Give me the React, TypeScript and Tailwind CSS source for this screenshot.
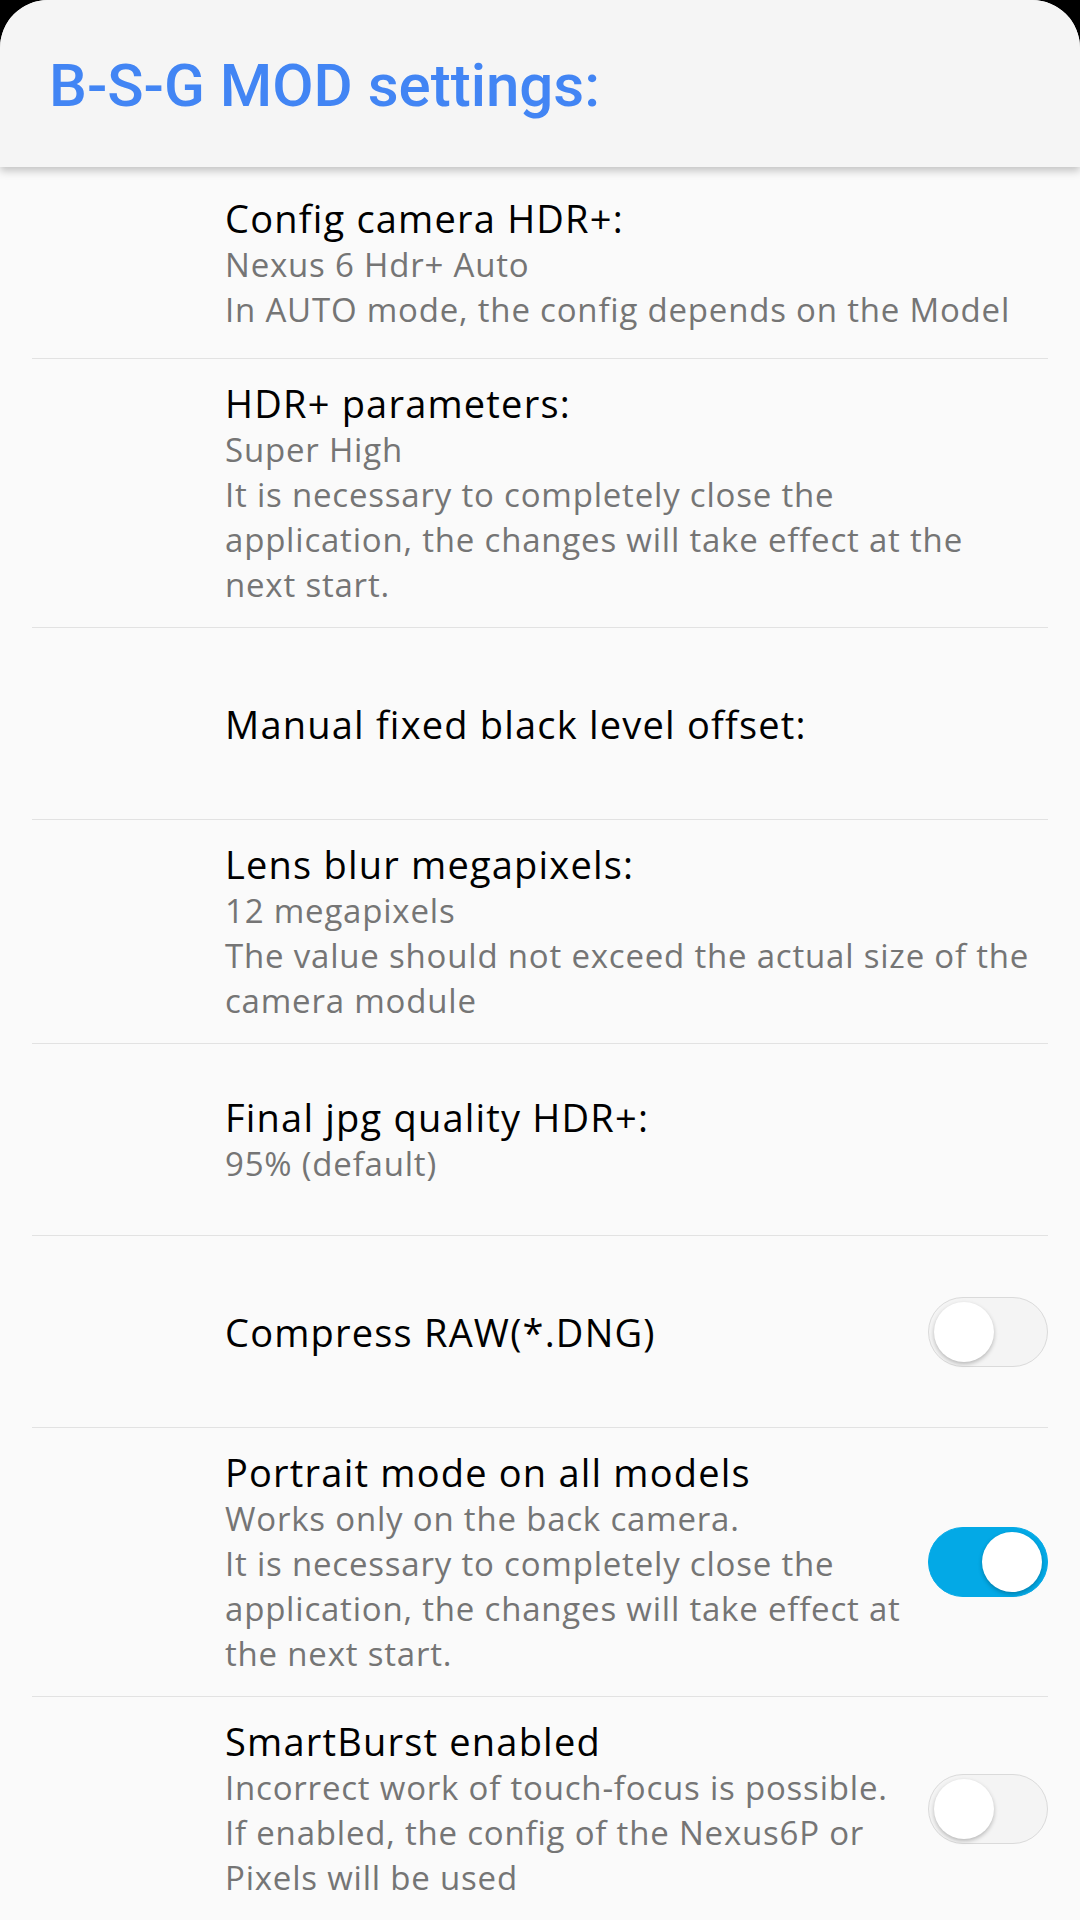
import React from 'react'

type Setting = {
    title: string;
    lines?: string[];
    toggle?: boolean;
}

const settings: Setting[] = [
    {
        title: 'Config camera HDR+:',
        lines: ['Nexus 6 Hdr+ Auto', 'In AUTO mode, the config depends on the Model'],
    },
    {
        title: 'HDR+ parameters:',
        lines: [
            'Super High',
            'It is necessary to completely close the',
            'application, the changes will take effect at the',
            'next start.',
        ],
    },
    { title: 'Manual fixed black level offset:' },
    {
        title: 'Lens blur megapixels:',
        lines: [
            '12 megapixels',
            'The value should not exceed the actual size of the',
            'camera module',
        ],
    },
    { title: 'Final jpg quality HDR+:', lines: ['95% (default)'] },
    { title: 'Compress RAW(*.DNG)', toggle: false },
    {
        title: 'Portrait mode on all models',
        lines: [
            'Works only on the back camera.',
            'It is necessary to completely close the',
            'application, the changes will take effect at',
            'the next start.',
        ],
        toggle: true,
    },
    {
        title: 'SmartBurst enabled',
        lines: [
            'Incorrect work of touch-focus is possible.',
            'If enabled, the config of the Nexus6P or',
            'Pixels will be used',
        ],
        toggle: false,
    },
]

const Toggle = ({ on }: { on: boolean }) => (
    <div
        className={`ml-[20px] w-[120px] h-[70px] shrink-0 rounded-full flex items-center px-[5px] border ${
            on ? 'bg-[#03a9e6] border-[#03a9e6] justify-end' : 'bg-[#f4f4f4] border-[#dadada] justify-start'
        }`}
    >
        <div className="w-[60px] h-[60px] rounded-full bg-white shadow-[0_2px_4px_rgba(0,0,0,0.25)]"></div>
    </div>
)

const SettingRow = ({ item, last }: { item: Setting; last: boolean }) => (
    <div
        className={`flex items-center min-h-[192px] py-[20px] pl-[193px] ${
            last ? '' : 'border-b border-[#e2e2e2]'
        }`}
    >
        <div className="flex-1 min-w-0">
            <div className="text-[38px] leading-[48px] tracking-[1.2px] text-black whitespace-nowrap">
                {item.title}
            </div>
            {item.lines?.map((line) => (
                <div
                    key={line}
                    className="text-[33px] leading-[45px] tracking-[0.8px] text-[#757575] whitespace-nowrap"
                >
                    {line}
                </div>
            ))}
        </div>
        {item.toggle !== undefined && <Toggle on={item.toggle} />}
    </div>
)

export default function App() {
    return (
        <div className="w-[1080px] h-[1920px] bg-black overflow-hidden">
            <div
                className="h-full rounded-t-[48px] overflow-hidden bg-[#fafafa]"
                style={{ fontFamily: '"Open Sans", "Noto Sans", sans-serif' }}
            >
                <header className="relative z-10 h-[167px] bg-[#f5f5f5] shadow-[0_4px_8px_rgba(0,0,0,0.22)] flex items-center pl-[49px] pt-[4px]">
                    <h1
                        className="text-[60px] leading-none font-medium text-[#4285f4]"
                        style={{ fontFamily: 'Roboto, "Liberation Sans", sans-serif' }}
                    >
                        B-S-G MOD settings:
                    </h1>
                </header>
                <div className="pl-[32px] pr-[32px]">
                    {settings.map((item, i) => (
                        <SettingRow key={item.title} item={item} last={i === settings.length - 1} />
                    ))}
                </div>
            </div>
        </div>
    )
}
